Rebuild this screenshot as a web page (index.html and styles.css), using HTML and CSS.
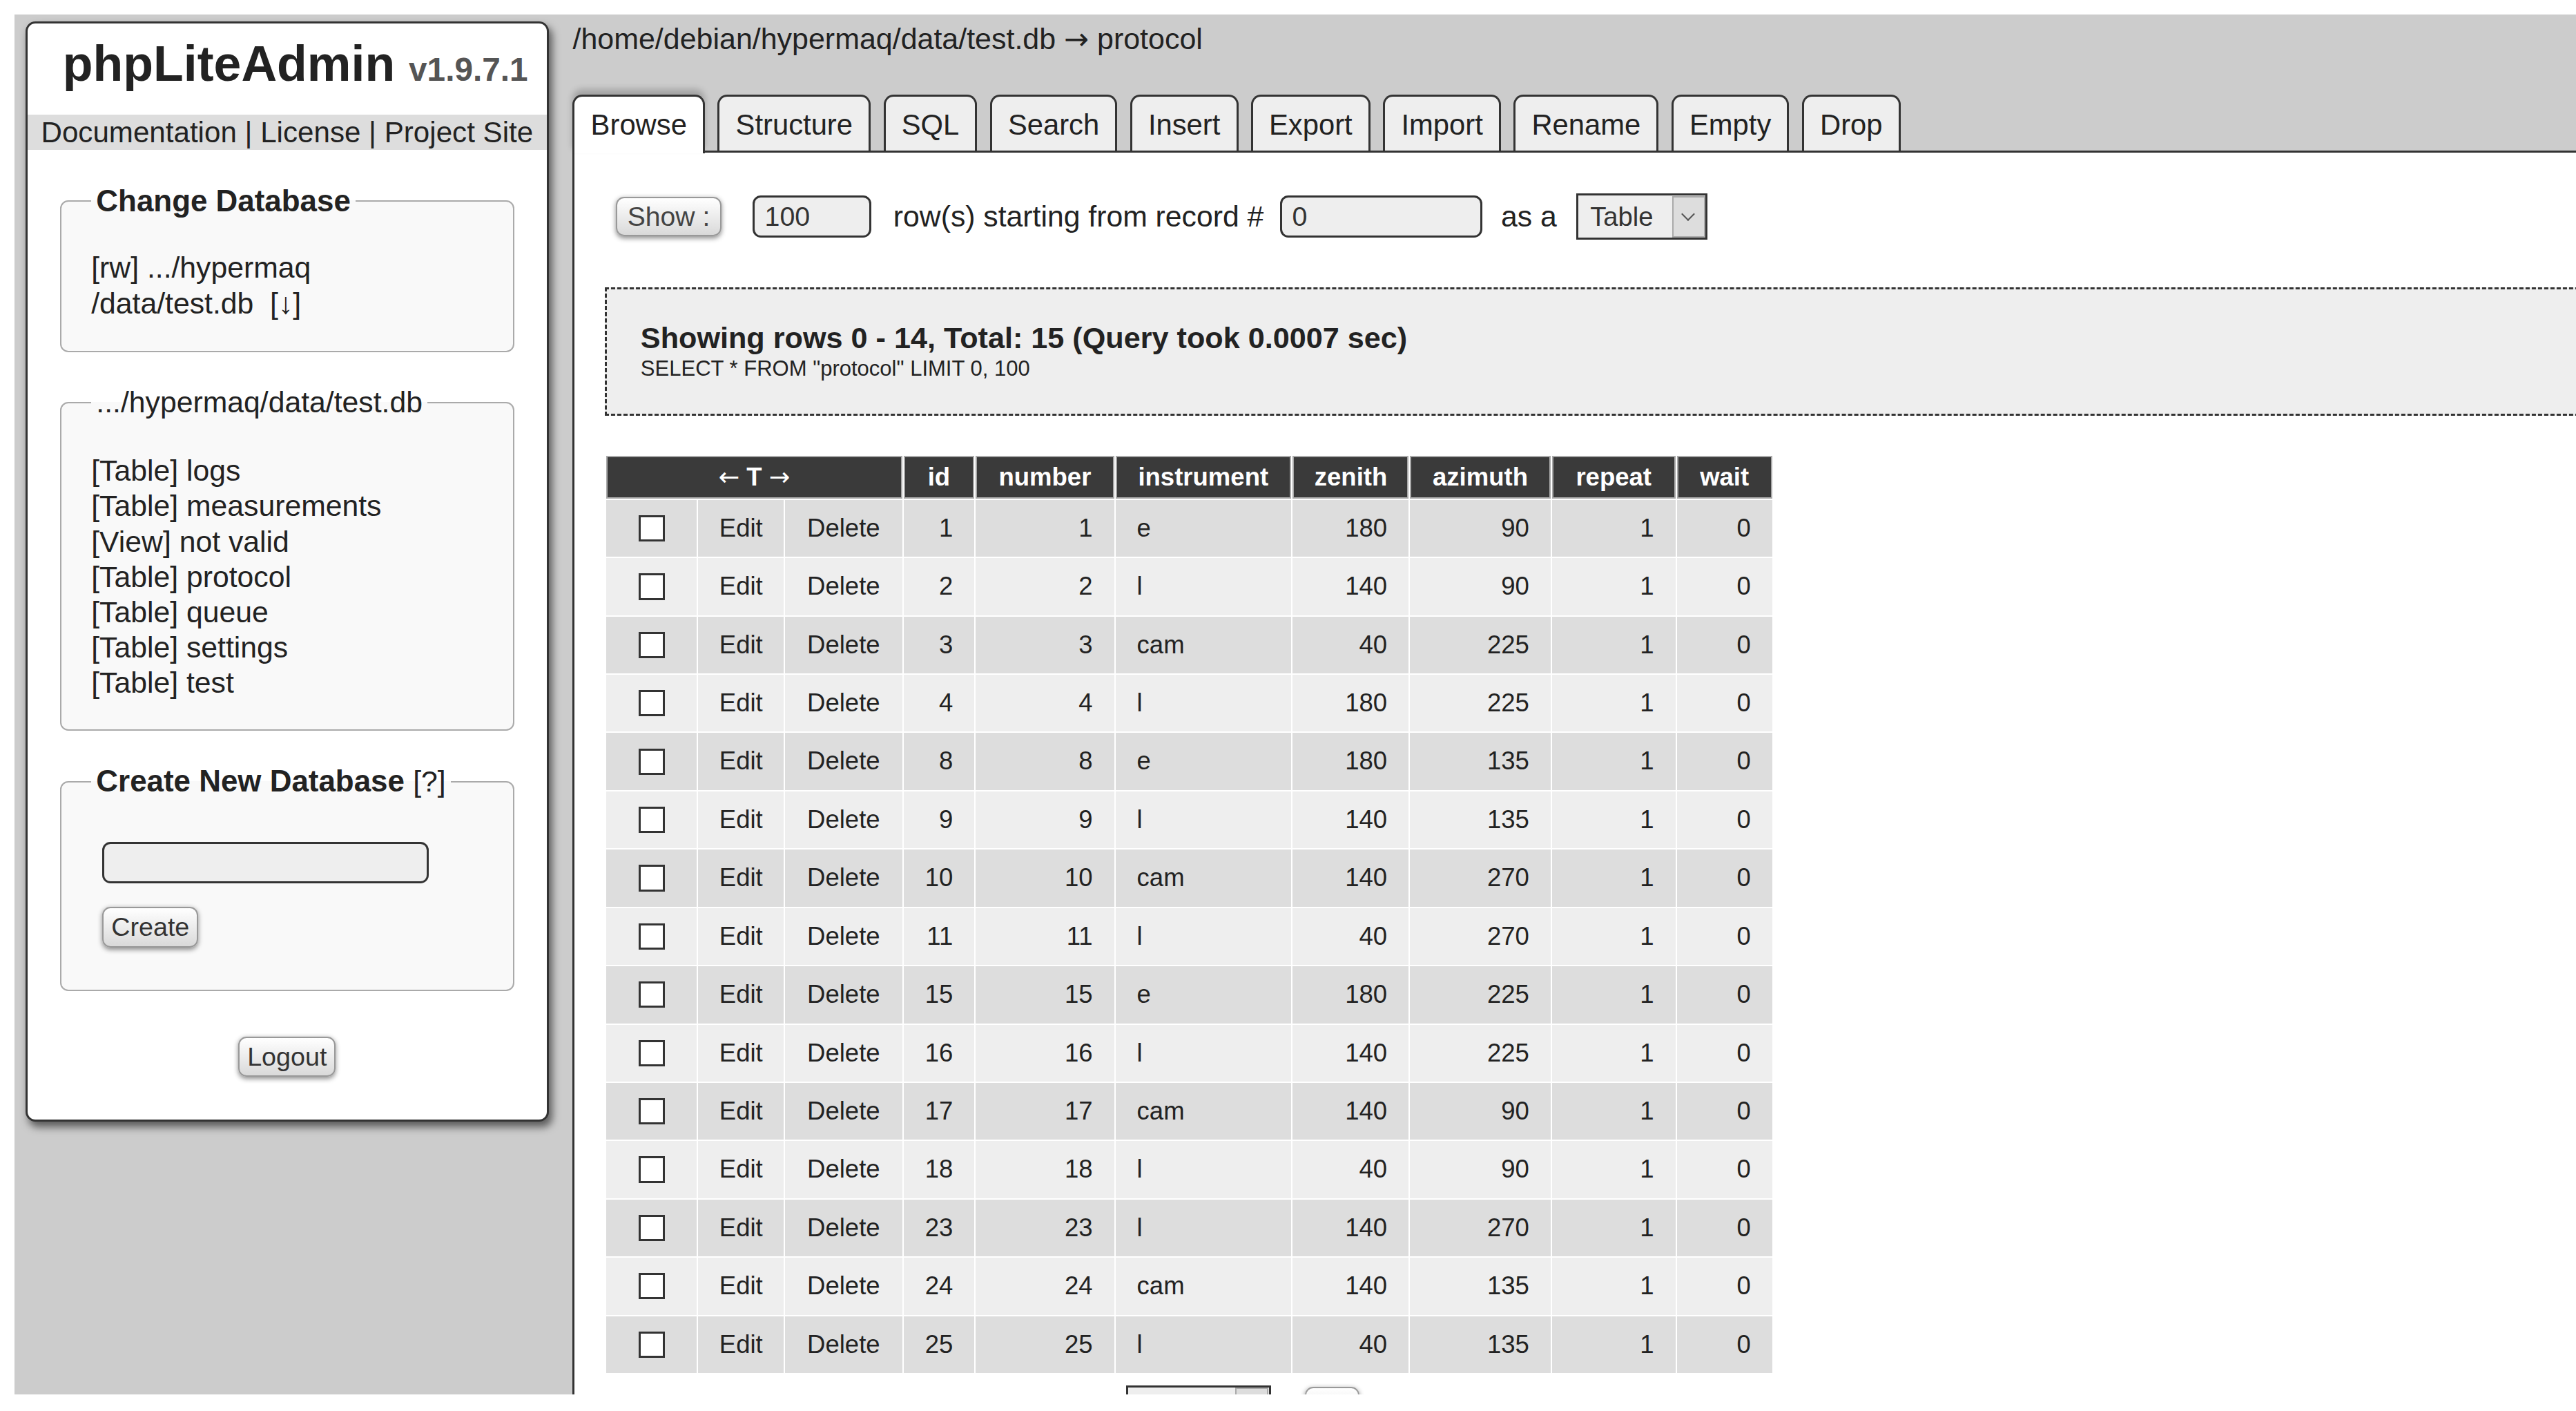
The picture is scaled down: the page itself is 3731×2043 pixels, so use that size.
FILE: index.html
```html
<!DOCTYPE html>
<html lang="en">
<head>
<meta charset="utf-8">
<title>phpLiteAdmin - protocol</title>
<link rel="stylesheet" href="styles.css">
</head>
<body>
<div class="page">
  <aside class="sidebar">
    <h1 class="brand">phpLiteAdmin <span class="version">v1.9.7.1</span></h1>
    <nav class="links"><a href="#">Documentation</a> | <a href="#">License</a> | <a href="#">Project Site</a></nav>

    <fieldset class="box box-db">
      <legend>Change Database</legend>
      <div class="dbpath">[rw] <a href="#">.../hypermaq<br>/data/test.db</a>&nbsp; <a href="#">[↓]</a></div>
    </fieldset>

    <fieldset class="box box-tables">
      <legend class="plain"><a href="#">.../hypermaq/data/test.db</a></legend>
      <ul class="tablelist">
        <li><a href="#">[Table] logs</a></li>
        <li><a href="#">[Table] measurements</a></li>
        <li><a href="#">[View] not valid</a></li>
        <li><a href="#">[Table] protocol</a></li>
        <li><a href="#">[Table] queue</a></li>
        <li><a href="#">[Table] settings</a></li>
        <li><a href="#">[Table] test</a></li>
      </ul>
    </fieldset>

    <fieldset class="box box-create">
      <legend>Create New Database <a href="#" class="help">[?]</a></legend>
      <input type="text" class="field newdb" aria-label="New database name">
      <button type="button" class="btn btn-create">Create</button>
    </fieldset>

    <div class="logout-row"><button type="button" class="btn">Logout</button></div>
  </aside>

  <main class="main">
    <h2 class="crumb"><a href="#">/home/debian/hypermaq/data/test.db</a> <span class="arrow">→</span> <a href="#">protocol</a></h2>

    <nav class="tabs">
      <a href="#" class="tab active">Browse</a>
      <a href="#" class="tab">Structure</a>
      <a href="#" class="tab">SQL</a>
      <a href="#" class="tab">Search</a>
      <a href="#" class="tab">Insert</a>
      <a href="#" class="tab">Export</a>
      <a href="#" class="tab">Import</a>
      <a href="#" class="tab">Rename</a>
      <a href="#" class="tab">Empty</a>
      <a href="#" class="tab">Drop</a>
    </nav>

    <section class="panel">
      <form class="controls">
        <button type="button" class="btn btn-show">Show :</button>
        <input type="text" class="field f-count" value="100" aria-label="rows">
        <span class="lbl-start">row(s) starting from record #</span>
        <input type="text" class="field f-start" value="0" aria-label="start">
        <span class="lbl-as">as a</span>
        <span class="select-wrap"><select class="select" aria-label="view as"><option>Table</option><option>Chart</option></select></span>
      </form>

      <div class="query">
        <div class="query-title">Showing rows 0 - 14, Total: 15 (Query took 0.0007 sec)</div>
        <div class="query-sql">SELECT * FROM "protocol" LIMIT 0, 100</div>
      </div>

      <table class="rows">
        <colgroup>
          <col class="c-chk"><col class="c-edit"><col class="c-del"><col class="c-id"><col class="c-number">
          <col class="c-instr"><col class="c-zenith"><col class="c-azimuth"><col class="c-repeat"><col class="c-wait">
        </colgroup>
        <thead>
          <tr>
            <th colspan="3"><span class="arrow">←</span> T <span class="arrow">→</span></th>
            <th>id</th><th>number</th><th>instrument</th><th>zenith</th><th>azimuth</th><th>repeat</th><th>wait</th>
          </tr>
        </thead>
        <tbody>
          <tr><td class="chk"><input type="checkbox" aria-label="row"></td><td class="act">Edit</td><td class="act">Delete</td><td class="num">1</td><td class="num">1</td><td>e</td><td class="num">180</td><td class="num">90</td><td class="num">1</td><td class="num">0</td></tr>
          <tr><td class="chk"><input type="checkbox" aria-label="row"></td><td class="act">Edit</td><td class="act">Delete</td><td class="num">2</td><td class="num">2</td><td>l</td><td class="num">140</td><td class="num">90</td><td class="num">1</td><td class="num">0</td></tr>
          <tr><td class="chk"><input type="checkbox" aria-label="row"></td><td class="act">Edit</td><td class="act">Delete</td><td class="num">3</td><td class="num">3</td><td>cam</td><td class="num">40</td><td class="num">225</td><td class="num">1</td><td class="num">0</td></tr>
          <tr><td class="chk"><input type="checkbox" aria-label="row"></td><td class="act">Edit</td><td class="act">Delete</td><td class="num">4</td><td class="num">4</td><td>l</td><td class="num">180</td><td class="num">225</td><td class="num">1</td><td class="num">0</td></tr>
          <tr><td class="chk"><input type="checkbox" aria-label="row"></td><td class="act">Edit</td><td class="act">Delete</td><td class="num">8</td><td class="num">8</td><td>e</td><td class="num">180</td><td class="num">135</td><td class="num">1</td><td class="num">0</td></tr>
          <tr><td class="chk"><input type="checkbox" aria-label="row"></td><td class="act">Edit</td><td class="act">Delete</td><td class="num">9</td><td class="num">9</td><td>l</td><td class="num">140</td><td class="num">135</td><td class="num">1</td><td class="num">0</td></tr>
          <tr><td class="chk"><input type="checkbox" aria-label="row"></td><td class="act">Edit</td><td class="act">Delete</td><td class="num">10</td><td class="num">10</td><td>cam</td><td class="num">140</td><td class="num">270</td><td class="num">1</td><td class="num">0</td></tr>
          <tr><td class="chk"><input type="checkbox" aria-label="row"></td><td class="act">Edit</td><td class="act">Delete</td><td class="num">11</td><td class="num">11</td><td>l</td><td class="num">40</td><td class="num">270</td><td class="num">1</td><td class="num">0</td></tr>
          <tr><td class="chk"><input type="checkbox" aria-label="row"></td><td class="act">Edit</td><td class="act">Delete</td><td class="num">15</td><td class="num">15</td><td>e</td><td class="num">180</td><td class="num">225</td><td class="num">1</td><td class="num">0</td></tr>
          <tr><td class="chk"><input type="checkbox" aria-label="row"></td><td class="act">Edit</td><td class="act">Delete</td><td class="num">16</td><td class="num">16</td><td>l</td><td class="num">140</td><td class="num">225</td><td class="num">1</td><td class="num">0</td></tr>
          <tr><td class="chk"><input type="checkbox" aria-label="row"></td><td class="act">Edit</td><td class="act">Delete</td><td class="num">17</td><td class="num">17</td><td>cam</td><td class="num">140</td><td class="num">90</td><td class="num">1</td><td class="num">0</td></tr>
          <tr><td class="chk"><input type="checkbox" aria-label="row"></td><td class="act">Edit</td><td class="act">Delete</td><td class="num">18</td><td class="num">18</td><td>l</td><td class="num">40</td><td class="num">90</td><td class="num">1</td><td class="num">0</td></tr>
          <tr><td class="chk"><input type="checkbox" aria-label="row"></td><td class="act">Edit</td><td class="act">Delete</td><td class="num">23</td><td class="num">23</td><td>l</td><td class="num">140</td><td class="num">270</td><td class="num">1</td><td class="num">0</td></tr>
          <tr><td class="chk"><input type="checkbox" aria-label="row"></td><td class="act">Edit</td><td class="act">Delete</td><td class="num">24</td><td class="num">24</td><td>cam</td><td class="num">140</td><td class="num">135</td><td class="num">1</td><td class="num">0</td></tr>
          <tr><td class="chk"><input type="checkbox" aria-label="row"></td><td class="act">Edit</td><td class="act">Delete</td><td class="num">25</td><td class="num">25</td><td>l</td><td class="num">40</td><td class="num">135</td><td class="num">1</td><td class="num">0</td></tr>
        </tbody>
      </table>

      <div class="bulk">
        <span class="select-wrap bulk-select"><select class="select" aria-label="with selected"><option></option></select></span>
        <button type="button" class="btn btn-go" aria-label="Go"></button>
      </div>
    </section>
  </main>
</div>
</body>
</html>
```

FILE: styles.css
```css
html {
  zoom: 2.387;
  background: #fff;
}

body {
  margin: 0;
  padding: 8.8px 0 0 8.8px;
  font-family: "Liberation Sans", Arial, Helvetica, sans-serif;
  font-size: 17.5px;
  color: #222;
}

a {
  color: inherit;
  text-decoration: none;
}

.page {
  display: flex;
  align-items: flex-start;
  height: 837.2px;
  overflow: hidden;
  background: #ccc;
}

/* ---------- sidebar ---------- */
.sidebar {
  flex: none;
  box-sizing: border-box;
  width: 317.6px;
  margin: 4.1px 0 0 6.6px;
  padding-bottom: 25.7px;
  background: #fff;
  border: 1.3px solid #333;
  border-radius: 6px;
  box-shadow: 2px 3px 5px rgba(0, 0, 0, 0.55);
}

.brand {
  margin: 0;
  padding: 6.7px 0 12.5px 10px;
  font-size: 30px;
  line-height: 36px;
  font-weight: bold;
  text-align: center;
  white-space: nowrap;
  color: #222;
}

.version {
  font-size: 20px;
  line-height: 20px;
  color: #555;
}

.links {
  background: #ddd;
  font-size: 17.65px;
  line-height: 21.5px;
  text-align: center;
  white-space: nowrap;
}

.box {
  margin: 0 19.6px;
  padding: 19.3px 18.3px 17.8px;
  min-width: 0;
  border: 1px solid #aaa;
  border-radius: 5px;
  background: #f9f9f9;
  font-size: 17.9px;
}

.box legend {
  padding: 0 3px;
  font-size: 18.4px;
  line-height: 20px;
  font-weight: bold;
  white-space: nowrap;
}

.box legend.plain {
  font-size: 17.9px;
  font-weight: normal;
}

.help {
  font-weight: normal;
  font-size: 17.9px;
}

.box-db {
  margin-top: 20.9px;
}

.box + .box {
  margin-top: 20.5px;
}

.dbpath {
  line-height: 22px;
}

.tablelist {
  list-style: none;
  margin: 0;
  padding: 1.5px 0 0;
  line-height: 21.4px;
}

.box-create {
  padding-top: 26.4px;
  padding-bottom: 25.8px;
}

.field {
  box-sizing: border-box;
  height: 25.5px;
  padding: 0 6px;
  border: 1.5px solid #333;
  border-radius: 5px;
  background: #eee;
  font-family: "Liberation Sans", Arial, sans-serif;
  font-size: 16.5px;
  color: #333;
}

.newdb {
  display: block;
  width: 198px;
  height: 25px;
  margin-left: 6.8px;
}

.btn {
  box-sizing: border-box;
  height: 24.4px;
  padding: 0 4.5px;
  border: 1px solid #999;
  border-radius: 5px;
  background: linear-gradient(#fff, #d9d9d9);
  box-shadow: 0 1px 3px rgba(0, 0, 0, 0.45);
  font-family: "Liberation Sans", Arial, sans-serif;
  font-size: 15.8px;
  color: #333;
}

.btn-create {
  display: block;
  margin: 14.5px 0 0 6.8px;
}

.logout-row {
  display: flex;
  justify-content: center;
  margin-top: 27.6px;
}

/* ---------- main ---------- */
.main {
  flex: 1;
  min-width: 0;
  align-self: stretch;
  display: flex;
  flex-direction: column;
  margin-left: 14.5px;
}

.crumb {
  margin: 0;
  padding-top: 4.2px;
  font-size: 18px;
  font-weight: normal;
  line-height: 21.5px;
  white-space: nowrap;
}

.arrow {
  font-family: "DejaVu Sans", "Liberation Sans", sans-serif;
  font-weight: normal;
}

.tabs {
  display: flex;
  align-items: flex-end;
  gap: 7.7px;
  margin-top: 22.8px;
  border-bottom: 1.4px solid #333;
}

.tab {
  padding: 6.4px 9.7px 5px;
  border: 1.3px solid #333;
  border-bottom: 0;
  border-radius: 6px 6px 0 0;
  background: #eee;
  line-height: 21.5px;
  white-space: nowrap;
}

.tab.active {
  position: relative;
  margin-bottom: -1.4px;
  padding-bottom: 6.4px;
  background: #fff;
  box-shadow: 0 -3px 4px rgba(0, 0, 0, 0.2);
}

.panel {
  flex: 1;
  padding: 24.7px 0 0 18.4px;
  background: #fff;
  border-left: 1.3px solid #333;
}

.controls {
  display: flex;
  align-items: center;
  height: 28px;
  margin: 0;
  padding-left: 6.6px;
  white-space: nowrap;
}

.btn-show {
  width: 64px;
  height: 24px;
  margin-right: 19px;
  padding: 0;
  font-size: 16.4px;
  color: #444;
}

.f-count {
  width: 72px;
  margin-right: 13.3px;
}

.lbl-start {
  margin-right: 10px;
  font-size: 17.9px;
}

.f-start {
  width: 122.7px;
  margin-right: 11.3px;
}

.lbl-as {
  margin-right: 12px;
  font-size: 17.9px;
}

.select-wrap {
  position: relative;
  display: inline-flex;
}

.select {
  appearance: none;
  -webkit-appearance: none;
  box-sizing: border-box;
  width: 79.5px;
  height: 28px;
  margin: 0;
  padding: 0 0 0 7px;
  border: 1.5px solid #333;
  border-radius: 0;
  background: #eee;
  font-family: "Liberation Sans", Arial, sans-serif;
  font-size: 16px;
  color: #333;
}

.select-wrap::after {
  content: "";
  position: absolute;
  top: 1.5px;
  right: 1.5px;
  bottom: 1.5px;
  width: 20px;
  box-sizing: border-box;
  border: 1px solid #aaa;
  background: #ddd;
  pointer-events: none;
}

.select-wrap::before {
  content: "";
  position: absolute;
  z-index: 1;
  top: 9.5px;
  right: 8.8px;
  width: 5px;
  height: 5px;
  border-right: 1px solid #555;
  border-bottom: 1px solid #555;
  transform: rotate(45deg);
  pointer-events: none;
}

.query {
  margin: 28.9px -40px 0 0;
  padding: 19.7px 20.3px 18.6px;
  border: 1.3px dashed #333;
  background: #eee;
  white-space: nowrap;
}

.query-title {
  font-size: 18.1px;
  line-height: 20px;
  font-weight: bold;
}

.query-sql {
  font-size: 13px;
  line-height: 17px;
}

/* ---------- result table ---------- */
.rows {
  margin-top: 23.4px;
  width: 709px;
  table-layout: fixed;
  border-spacing: 1.25px;
  font-size: 15.3px;
}

.c-chk { width: 54.3px; }
.c-edit { width: 51.7px; }
.c-del { width: 70.6px; }
.c-id { width: 42.7px; }
.c-number { width: 83.4px; }
.c-instr { width: 105.9px; }
.c-zenith { width: 70px; }
.c-azimuth { width: 84.8px; }
.c-repeat { width: 74.4px; }
.c-wait { width: 57.5px; }

.rows th {
  padding: 0 12.5px;
  border: 1px solid #aaa;
  background: #3a3a3a;
  color: #fff;
  font-weight: bold;
  line-height: 24.4px;
  text-align: center;
  white-space: nowrap;
}

.rows td {
  padding: 0 13px;
  line-height: 34.52px;
  white-space: nowrap;
  color: #222;
}

.rows tbody tr:nth-child(odd) td {
  background: #ddd;
}

.rows tbody tr:nth-child(even) td {
  background: #eee;
}

.rows td.num {
  text-align: right;
}

.rows td.act {
  text-align: center;
}

.rows td.chk {
  padding: 0;
}

.chk input {
  appearance: none;
  -webkit-appearance: none;
  display: block;
  box-sizing: border-box;
  width: 16px;
  height: 16px;
  margin: 0 auto;
  border: 1.5px solid #333;
  border-radius: 0;
  background: #fff;
}

.bulk {
  display: flex;
  align-items: flex-start;
  margin-top: 6.6px;
  padding-left: 316px;
}

.bulk-select .select {
  width: 88px;
  height: 26px;
}

.btn-go {
  width: 33px;
  height: 24px;
  margin: 1px 0 0 20.8px;
  padding: 0;
}
```
